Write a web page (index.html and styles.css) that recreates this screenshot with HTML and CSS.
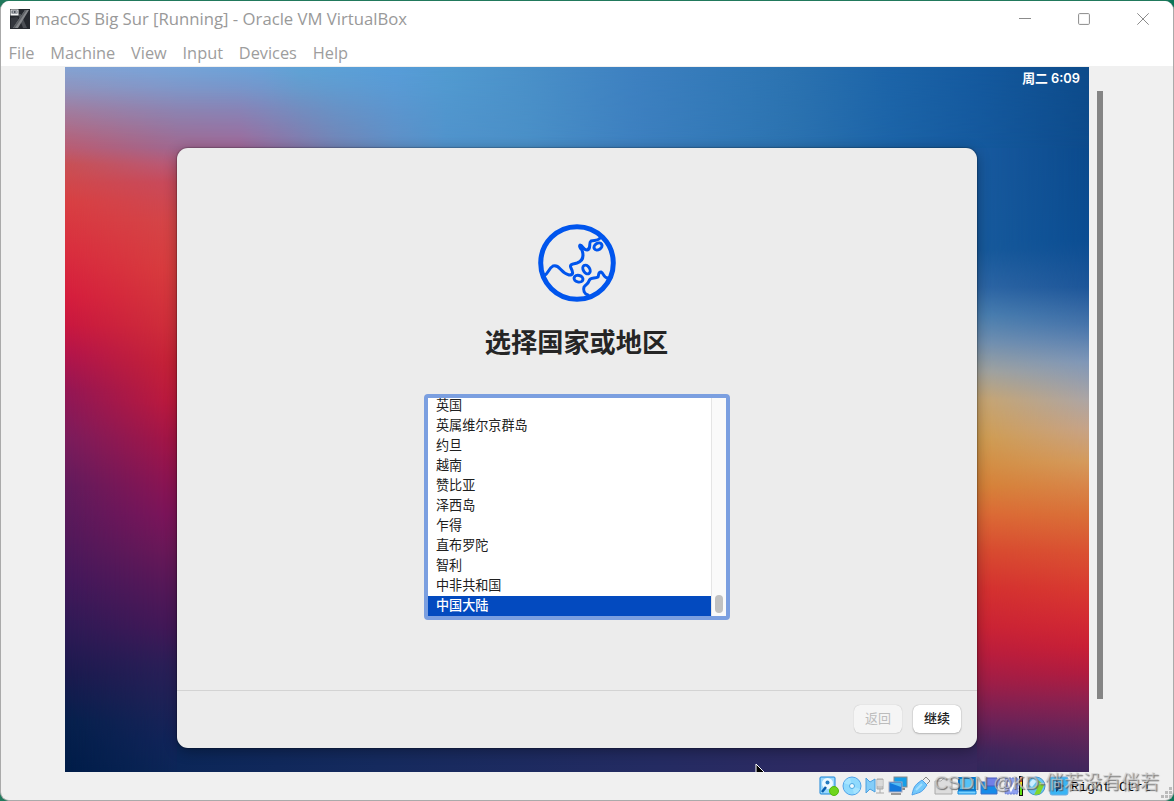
FILE: index.html
```html
<!DOCTYPE html>
<html lang="zh-CN">
<head>
<meta charset="utf-8">
<title>macOS Big Sur [Running] - Oracle VM VirtualBox</title>
<link rel="stylesheet" href="styles.css">
</head>
<body>
<div class="window">
  <header class="titlebar">
    <svg class="app-icon" viewBox="0 0 20 20"><rect width="20" height="20" fill="#25282e"/><path d="M1 19V9l6-1 3 5-4 6z" fill="#34373e"/><path d="M8 5h3l6 14h-4z" fill="#4b4e54"/><path d="M15 1h4L8 19H3z" fill="#85878b"/><path d="M15 1h2L5 19H3z" fill="#5e6166"/><rect x=".5" y=".5" width="8" height="6" fill="#f4f5f6"/><path d="M1.500 1.500h6v3h-6z" fill="#4a505a"/><path d="M2.500 3H4M5.500 3H7" stroke="#fff"/></svg>
    <h1 class="title">macOS Big Sur [Running] - Oracle VM VirtualBox</h1>
    <div class="controls">
      <svg viewBox="0 0 12 12"><path d="M0 5.500h12"/></svg>
      <svg viewBox="0 0 12 12"><rect x=".6" y=".6" width="10.800" height="10.800" rx="1"/></svg>
      <svg viewBox="0 0 12 12"><path d="m.3.3 11.400 11.400M11.700.3.3 11.700"/></svg>
    </div>
  </header>
  <nav class="menu"><span>File</span><span>Machine</span><span>View</span><span>Input</span><span>Devices</span><span>Help</span></nav>
  <main class="viewport">
    <section class="desktop">
      <div class="wall top-low"></div>
      <div class="wall top-high"></div>
      <div class="wall left-inner"></div>
      <div class="wall left-outer"></div>
      <div class="wall right-inner"></div>
      <div class="wall right-outer"></div>
      <div class="wall bottom"></div>
      <div class="clock">周二 6:09</div>
      <div class="dialog">
        <div class="content">
          <svg class="globe" viewBox="0 0 78 78"><circle cx="39" cy="39" r="36.300" stroke-width="5"/><path d="M6.500 51.500C10 50 11 44 15 42c7-2 7 7 16 9 5 0 4-3 2-7-2-4 2-4 6-5 6-2 7-7 5-13-2-2-3-4-2-5 3 0 3 5 7 5 5-1 1-7 4-9 4-1 7 0 9-3"/><path d="M50 71c-4-1-5-5-4-8 2-3 4-3 5-6 1-4 6-2 9-4 1-2 0-5 3-5 3 1 2 6 7 6"/><ellipse cx="60" cy="22.500" rx="4.300" ry="3.200" transform="rotate(-32 60 22.500)"/><ellipse cx="48.500" cy="45.500" rx="3.200" ry="4.700" transform="rotate(-32 48.500 45.500)"/><ellipse cx="40.500" cy="54.700" rx="4.500" ry="3.300" transform="rotate(14 40.500 54.700)"/></svg>
          <h2 class="heading">选择国家或地区</h2>
          <div class="picker">
            <ul class="list"><li>英国</li><li>英属维尔京群岛</li><li>约旦</li><li>越南</li><li>赞比亚</li><li>泽西岛</li><li>乍得</li><li>直布罗陀</li><li>智利</li><li>中非共和国</li><li class="selected">中国大陆</li></ul>
            <div class="track"><div class="thumb"></div></div>
          </div>
        </div>
        <footer class="actions"><button class="btn" disabled>返回</button><button class="btn primary">继续</button></footer>
      </div>
      <svg class="cursor" viewBox="0 0 10 10"><path d="M1 12V1l10 10z" fill="#000" stroke="#fff"/></svg>
    </section>
    <div class="scrollbar"></div>
  </main>
  <footer class="status">
    <svg viewBox="0 0 20 20"><rect x="1" y="1" width="15" height="17" rx="1" fill="#9bd8fc" stroke="#1684d8"/><circle cx="8.500" cy="7.500" r="5.500" fill="#eefaff"/><circle cx="8.500" cy="6.500" r="2" fill="#247cc0"/><path d="m3 16 4-5" stroke="#075cab" stroke-width="2.500"/><circle cx="15" cy="15" r="4.500" fill="#6ed51c" stroke="#54b710"/></svg>
    <svg viewBox="0 0 20 20"><circle cx="10" cy="10" r="9" fill="#8fdafd" stroke="#4fa3ea"/><path d="m10 10-8-3a9 9 0 0 1 6-5zm0 0 8 3a9 9 0 0 1-6 5z" fill="#a5e4ff"/><circle cx="10" cy="10" r="2.500" fill="#eefaff" stroke="#4ba8e3"/></svg>
    <svg viewBox="0 0 20 20"><path d="m1 2 4 4 5-3v13l-5-3-4 4z" fill="#84cdf8" stroke="#4a9fe0"/><path d="M12 3h6v10h-6zM15 13v4M11 17h8" fill="#c5c5c5" stroke="#aaa"/><path d="M12 5h6M12 7h6M12 9h6" stroke="#eee"/></svg>
    <svg viewBox="0 0 20 20"><rect x="6" y="1" width="13" height="10" fill="#159ee8" stroke="#888"/><path d="M10 13h7" stroke="#888" stroke-width="2"/><rect x="1" y="6" width="13" height="10" fill="#1479dc" stroke="#aab"/><path d="M2 7h11v4z" fill="#52baf2"/><path d="M3 18h10" stroke="#999" stroke-width="2"/></svg>
    <svg viewBox="0 0 20 20"><path d="m11 5 4-4 4 4-4 4z" fill="#eee" stroke="#888"/><path d="m7 7 4-3 5 5-3 4c-3 4-7 4-12 6 1-5 2-9 6-12z" fill="#74c9fb" stroke="#4c9ee8"/><path d="m5 14 6-6" stroke="#a5e0ff" stroke-width="2"/></svg>
    <svg viewBox="0 0 20 20"><path d="M1 5h6l2-2h9v15H1z" fill="#ddd" stroke="#aaa"/></svg>
    <svg viewBox="0 0 20 20"><rect x="2" y="2" width="16" height="12" fill="#55c2f7" stroke="#0878cd" stroke-width="2"/><path d="M1 15h18v3H1z" fill="#79d2ff" stroke="#168add"/></svg>
    <svg viewBox="0 0 20 20"><path d="M1 6h16v12H1z" fill="#168be9" stroke="#3c6fc8"/><path d="M6 2h11v8H6z" fill="#717fe6" stroke="#4b5bbd"/><path d="m17 5 3-3v8l-3-2" fill="#7788eb"/></svg>
    <svg viewBox="0 0 20 20"><rect x="2" y="2" width="13" height="16" rx="1" fill="#8e9ff0" stroke="#6479d0" stroke-dasharray="2 1"/><path d="m5 6 3 8 4-8" fill="none" stroke="#fff" stroke-width="2"/><path d="M16 0h4v20h-4z" fill="#111"/><path d="M17 1h2v5h-2z" fill="#e64b16"/><path d="M17 6h2v5h-2z" fill="#f4e42b"/><path d="M17 11h2v8h-2z" fill="#62e016"/></svg>
    <svg viewBox="0 0 20 20"><circle cx="10" cy="10" r="9" fill="#66c3f2" stroke="#4392cd"/><path d="m12 4 6 5-4 9-6 1 3-6-3-2 5-2z" fill="#82d62b"/><path d="m2 8 5-5 4 2-5 6z" fill="#cbefff"/></svg>
    <svg viewBox="0 0 20 20"><rect x="1" y="1" width="18" height="18" rx="2" fill="#3ab5f5" stroke="#70aadd"/><path d="m7 4 8 6-8 6z" fill="#123f73"/></svg>
    <span class="host-key">Right Ctrl</span>
    <svg class="grip" viewBox="0 0 11 11"><path d="M8 0h3v3H8zM4 4h3v3H4zm4 0h3v3H8zM0 8h3v3H0zm4 0h3v3H4zm4 0h3v3H8z"/></svg>
  </footer>
  <div class="watermark">CSDN @KD-倘若没有倘若</div>
</div>
</body>
</html>
```
FILE: styles.css
```css
* { box-sizing: border-box; }
body { margin: 0; background: linear-gradient(90deg, #21795c 0 99%, #087557); height: 801px; overflow: hidden; font-family: "Liberation Sans", "Noto Sans CJK SC", sans-serif; }
.window { position: relative; width: 1174px; height: 800px; margin-top: 1px; border: 1px solid #aaa; border-top: 0; border-radius: 9px; background: #f0f0f0; overflow: hidden; display: flex; flex-direction: column; }
.titlebar { height: 35px; flex: none; background: #fff; display: flex; align-items: center; padding: 0 24px 0 9px; }
.app-icon { width: 20px; height: 20px; margin-right: 5px; }
.title { margin: 0; font: 400 16.700px/24px "Open Sans", sans-serif; color: #999; white-space: nowrap; }
.controls { margin-left: auto; display: flex; gap: 47px; }
.controls svg { width: 12px; height: 12px; fill: none; stroke: #8b8b8b; }
.menu { height: 30px; flex: none; background: #fff; display: flex; gap: 15.800px; padding: 5px 7.600px; font: 16.350px/25px "Open Sans", sans-serif; color: #9d9d9d; }
.viewport { display: flex; height: 706px; flex: none; padding: 1px 0 0 64px; }
.desktop { position: relative; width: 1024px; height: 705px; flex: none; overflow: hidden; padding: 81px 112px 24px; }
.wall { position: absolute; inset: 0; }
.top-low { background: linear-gradient(90deg, #ba5c72, #a06890 112px, #a06898 175px, #8a76a8 225px, #7484b6 270px, #608fc6 330px, #5193cc 380px, #4a90c8 462px, #3d80c0 571px, #3077b5 684px, #2b72b0 730px, #1c64a8 826px, #155a9f 908px, #0d4b8c); }
.top-high { background: linear-gradient(90deg, #83a3d3, #7aa4d8 85px, #69a2d8 197px, #5ea3d6 235px, #579dd8 332px, #519ad0 384px, #4a90c8 462px, #3d80c0 571px, #3077b5 684px, #2b72b0 730px, #1c64a8 826px, #155a9f 908px, #0d4b8a); mask-image: linear-gradient(#000, #000c 20px, #0007 43px, transparent 81px); }
.left-inner { top: 81px; width: 125px; background: linear-gradient(#a06890, #b85a78 16px, #c84a5c 35px, #d44648 73px, #d83e3e 120px, #d0303a 177px, #c82336 214px, #c01a3c 252px, #a81545 290px, #931450 328px, #80145a 366px, #6c1858 403px, #561858 441px, #441858 479px, #2c1f58 517px, #1f2258 555px, #12245a 592px, #0c2658 624px); }
.left-outer { top: 81px; width: 112px; background: linear-gradient(#ba5c72, #c85055 16px, #d83f42 54px, #d92e3e 101px, #d51d3d 148px, #c8173f 177px, #b3144a 205px, #931654 243px, #7a1c5c 290px, #611b5c 337px, #53195a 384px, #42185a 432px, #2e1a55 479px, #1a1a4e 526px, #05204c 574px, #001c48 621px); mask-image: linear-gradient(90deg, #000, transparent); }
.right-inner { top: 81px; left: 900px; background: linear-gradient(#185aa0, #175a9c 101px, #2d66a5 139px, #4a7fb0 167px, #7391b0 195px, #a3a39c 224px, #c8a570 252px, #d09c50 290px, #d68238 337px, #dc6a35 366px, #d84a30 403px, #d43030 441px, #ca2335 479px, #b81d3e 507px, #9c1e48 536px, #6a2258 574px, #40265c 602px, #30285c); }
.right-outer { top: 81px; left: 912px; background: linear-gradient(#0b4a8c, #0b4d92 92px, #1d5699 139px, #4674ab 177px, #7f97b8 214px, #aca5a5 252px, #c6a388 281px, #d49a5c 314px, #d8864a 337px, #d97038 366px, #da5232 403px, #d83a30 441px, #d32b33 470px, #c92036 498px, #b01c40 526px, #8a2250 555px, #672558 583px, #4a265c 612px, #40265c); mask-image: linear-gradient(90deg, transparent, #000); }
.bottom { top: 670px; left: 112px; right: 112px; background: linear-gradient(90deg, #0b2658, #152a5e 25%, #242b62 60%, #2e2a62 82%, #38285d); }
.clock { position: absolute; top: 2px; right: 9px; font: 600 12.800px/20px Inter, "Noto Sans CJK SC", sans-serif; color: #fff; }
.dialog { position: relative; height: 600px; border-radius: 11px; background: #ececec; box-shadow: 0 0 1px 1px #0003, 0 3px 14px #0005; display: flex; flex-direction: column; }
.content { height: 542px; display: flex; flex-direction: column; align-items: center; padding-top: 76px; }
.globe { width: 78px; height: 78px; flex: none; fill: none; stroke: #0055ed; stroke-width: 3; stroke-linecap: round; stroke-linejoin: round; }
.heading { margin: 19px 0 33px -1px; font: 700 26.200px/40px "Noto Sans CJK SC", sans-serif; color: #252525; }
.picker { width: 306px; height: 226px; flex: none; border: 4px solid #7b9fe0; border-radius: 4px; background: #fff; display: flex; overflow: hidden; }
.list { flex: 1; height: 218px; list-style: none; margin: 0; padding: 0; font: 13.100px/20px "Noto Sans CJK SC", sans-serif; color: #202020; display: flex; flex-direction: column; justify-content: flex-end; }
.list li { height: 20px; flex: none; padding-left: 8px; line-height: 18px; }
.list .selected { color: #fff; background: #034abf; font-weight: 500; }
.track { width: 15px; background: #fafafa; border-left: 1px solid #e5e5e5; display: flex; align-items: flex-end; padding: 3px; }
.thumb { width: 8px; height: 18px; border-radius: 4px; background: #c1c1c1; }
.actions { height: 58px; border-top: 1px solid #d3d3d3; display: flex; justify-content: flex-end; gap: 11px; padding: 14px 16px; }
.btn { width: 48px; height: 28px; border: 0; padding: 0 0 2px; border-radius: 6px; background: #f5f5f5; color: #bcbcbc; box-shadow: 0 0 1px #0004, 0 1px 1px #0001; font: 13px/26px "Noto Sans CJK SC", sans-serif; }
.btn.primary { background: #fff; color: #202020; box-shadow: 0 0 1px #0006, 0 1px 2px #0003; font-weight: 500; }
.cursor { position: absolute; left: 690px; top: 696px; width: 10px; height: 10px; }
.scrollbar { width: 6px; height: 608px; margin: 24px 0 0 8px; background: #858585; }
.status { height: 28px; flex: none; display: flex; align-items: center; padding: 0 1px 0 818px; gap: 3px; }
.status svg { width: 20px; height: 20px; flex: none; }
.host-key { font: 13.300px/20px "Liberation Mono", monospace; color: #000; white-space: nowrap; margin: 3px 0 0 -1px; }
.status .grip { width: 11px; height: 11px; fill: #bbb; margin: 12px 0 0 auto; }
.watermark { position: absolute; right: 14px; bottom: 3px; white-space: nowrap; font: 19px/28px "Liberation Sans", "Noto Sans CJK SC", sans-serif; color: #d0d0d0aa; text-shadow: 1px 1px 1px #555c; }
```
